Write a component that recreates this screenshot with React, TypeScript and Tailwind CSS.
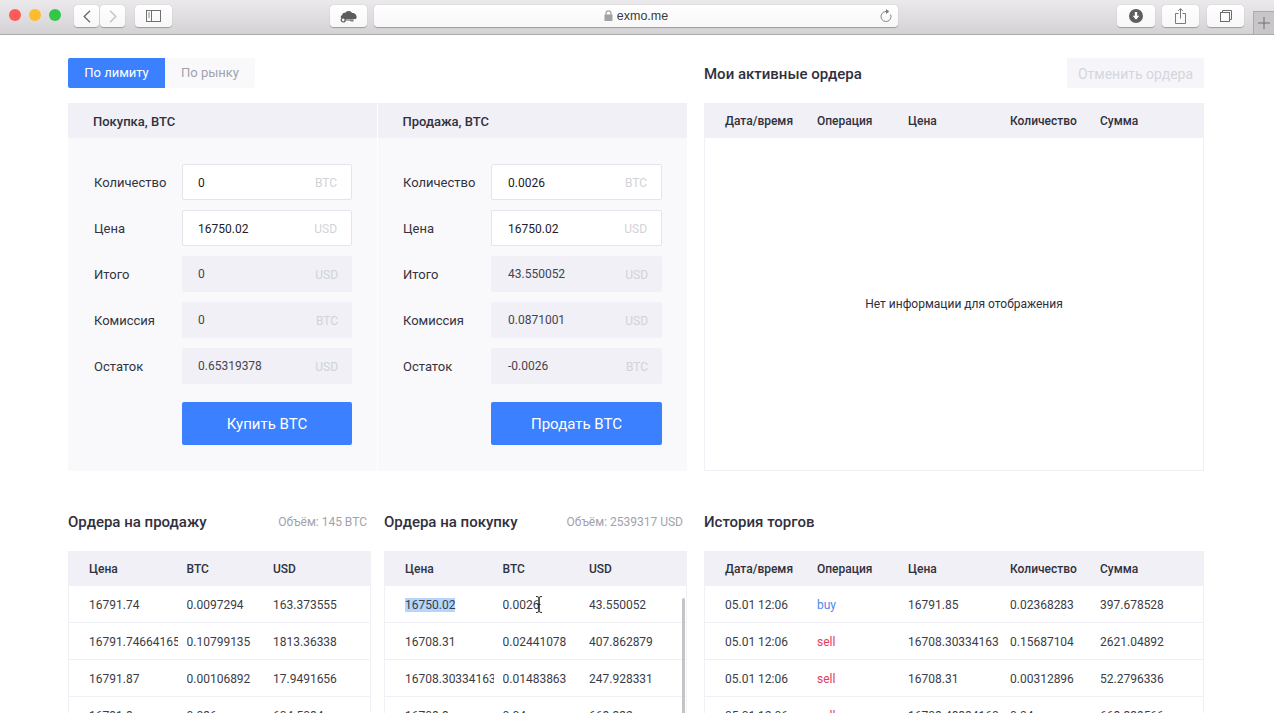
const limitForms = [
  {
    title: 'Покупка, BTC',
    button: 'Купить BTC',
    rows: [
      { label: 'Количество', value: '0', unit: 'BTC', editable: true },
      { label: 'Цена', value: '16750.02', unit: 'USD', editable: true },
      { label: 'Итого', value: '0', unit: 'USD', editable: false },
      { label: 'Комиссия', value: '0', unit: 'BTC', editable: false },
      { label: 'Остаток', value: '0.65319378', unit: 'USD', editable: false },
    ],
  },
  {
    title: 'Продажа, BTC',
    button: 'Продать BTC',
    rows: [
      { label: 'Количество', value: '0.0026', unit: 'BTC', editable: true },
      { label: 'Цена', value: '16750.02', unit: 'USD', editable: true },
      { label: 'Итого', value: '43.550052', unit: 'USD', editable: false },
      { label: 'Комиссия', value: '0.0871001', unit: 'USD', editable: false },
      { label: 'Остаток', value: '-0.0026', unit: 'BTC', editable: false },
    ],
  },
];

const sellOrders = [
  ['16791.74', '0.0097294', '163.373555'],
  ['16791.74664165', '0.10799135', '1813.36338'],
  ['16791.87', '0.00106892', '17.9491656'],
  ['16791.8', '0.036', '604.5084'],
];

const buyOrders = [
  ['16750.02', '0.0026', '43.550052'],
  ['16708.31', '0.02441078', '407.862879'],
  ['16708.30334163', '0.01483863', '247.928331'],
  ['16708.3', '0.04', '668.332'],
];

const history = [
  ['05.01 12:06', 'buy', '16791.85', '0.02368283', '397.678528'],
  ['05.01 12:06', 'sell', '16708.30334163', '0.15687104', '2621.04892'],
  ['05.01 12:06', 'sell', '16708.31', '0.00312896', '52.2796336'],
  ['05.01 12:06', 'sell', '16708.48884160', '0.04', '668.339566'],
];

function ToolButton({ className, children }: { className: string; children?: React.ReactNode }) {
  return (
    <div className={`h-[22px] flex items-center justify-center bg-gradient-to-b from-white to-[#f7f7f7] rounded-[4px] shadow-[0_0.5px_1px_rgba(0,0,0,0.28)] ${className}`}>
      {children}
    </div>
  );
}

function BrowserBar() {
  return (
    <div className="relative h-[35px] shrink-0 flex items-center pb-[2px] bg-gradient-to-b from-[#ebe9eb] to-[#d4d2d4] border-b border-[#acabac]">
      <div className="flex items-center gap-2 pl-[9px] -mt-[2px]">
        <span className="w-3 h-3 rounded-full bg-[#fc5b57]" />
        <span className="w-3 h-3 rounded-full bg-[#fdbc2e]" />
        <span className="w-3 h-3 rounded-full bg-[#33c748]" />
      </div>
      <div className="flex ml-[13px] gap-[1px]">
        <ToolButton className="w-[25px]">
          <svg width="8" height="13" viewBox="0 0 8 13" fill="none" stroke="#6a6a6a" strokeWidth="1.3">
            <path d="M7 0.8L1.2 6.5 7 12.2" />
          </svg>
        </ToolButton>
        <ToolButton className="w-[25px]">
          <svg width="8" height="13" viewBox="0 0 8 13" fill="none" stroke="#c0c0c0" strokeWidth="1.3">
            <path d="M1 0.8L6.8 6.5 1 12.2" />
          </svg>
        </ToolButton>
      </div>
      <ToolButton className="w-[37px] ml-[10px]">
        <svg width="15" height="12" viewBox="0 0 15 12" fill="none" stroke="#707070">
          <rect x="0.5" y="0.5" width="14" height="11" />
          <path d="M5.5 0.5v11" />
          <path d="M2 3h2M2 5h2M2 7h2" strokeWidth="0.8" />
        </svg>
      </ToolButton>
      <ToolButton className="w-[37px] ml-[158px]">
        <svg width="17" height="13" viewBox="0 0 17 13">
          <path d="M3 9.5C0.5 9 0 6 2.2 5 2.4 3.2 4 2.4 5.2 2.9 6.4 0.5 10.5 0.2 12 3 14.5 2.8 17 5 16.6 7.5 16.4 8.8 15.4 9.5 14.5 9.5z" fill="#5c5c5c" />
          <path d="M1 9.7h14v1.6H5.5" fill="none" stroke="#ffffff" strokeWidth="1" />
          <circle cx="3.2" cy="10" r="2" fill="#f4f4f4" stroke="#5c5c5c" strokeWidth="1.2" />
          <path d="M5 10h8.5M11 10v1.5M12.8 10v1.5" fill="none" stroke="#5c5c5c" strokeWidth="1.2" />
        </svg>
      </ToolButton>
      <ToolButton className="w-[524px] ml-[7px] relative">
        <div className="flex items-center gap-[4px] font-['Liberation_Sans',sans-serif] text-[12.5px] text-[#3a3a3a]">
          <svg width="9" height="11" viewBox="0 0 9 11" className="-mt-[1px]">
            <path d="M2 5V3.2C2 1.8 3 .8 4.5 .8S7 1.8 7 3.2V5" fill="none" stroke="#a2a2a2" strokeWidth="1.2" />
            <rect x="0.5" y="4.5" width="8" height="6.5" rx="0.5" fill="#a2a2a2" />
          </svg>
          <span>exmo.me</span>
        </div>
        <svg className="absolute right-[6px] top-[3px]" width="12" height="15" viewBox="0 0 12 15" fill="none">
          <path d="M6 3.5A5 5 0 1 0 10.6 6.5" stroke="#787878" strokeWidth="0.9" />
          <path d="M6 1L9.2 3.5 6 6z" fill="#787878" />
        </svg>
      </ToolButton>
      <ToolButton className="w-[38px] ml-[219px]">
        <svg width="14" height="14" viewBox="0 0 14 14">
          <circle cx="7" cy="7" r="7" fill="#5e5e5e" />
          <path d="M5.8 3h2.4v3.8h2.2L7 10.8 3.6 6.8h2.2z" fill="#ffffff" />
        </svg>
      </ToolButton>
      <ToolButton className="w-[37px] ml-[7px]">
        <svg width="11" height="16" viewBox="0 0 11 16" fill="none" stroke="#6c6c6c" strokeWidth="0.9">
          <path d="M3.5 5.5h-3v10h10v-10h-3" />
          <path d="M5.5 10.5V0.8M3.2 3L5.5 0.6 7.8 3" />
        </svg>
      </ToolButton>
      <ToolButton className="w-[37px] ml-[8px]">
        <svg width="12" height="12" viewBox="0 0 12 12" fill="none" stroke="#6c6c6c">
          <rect x="0.5" y="2.5" width="9" height="9" />
          <path d="M2.5 2.5v-2h9v9h-2" />
        </svg>
      </ToolButton>
      <div className="absolute right-0 top-[11px] w-[21px] h-[23px] flex items-center justify-center bg-[#c8c6c8] border-l border-t border-[#acabac]">
        <svg width="12" height="12" viewBox="0 0 12 12" stroke="#707070" strokeWidth="1">
          <path d="M6 0v12M0 6h12" />
        </svg>
      </div>
    </div>
  );
}

function FormColumn({ form, sell }: { form: (typeof limitForms)[number]; sell: boolean }) {
  return (
    <div className="flex flex-col w-[309px]">
      <div className={`h-[35px] flex items-center pt-[2px] bg-[#f0f0f6] text-[13px] font-medium text-[#30303e] ${sell ? 'pl-[24.5px]' : 'pl-[25px]'}`}>
        {form.title}
      </div>
      <div className={`flex-1 bg-[#f9f9fb] pt-[26px] ${sell ? 'pl-[25px]' : 'pl-[26px]'} pr-[25px]`}>
        <div className="flex flex-col gap-[10px]">
          {form.rows.map((row) => (
            <div key={row.label} className="flex items-center justify-between h-[36px]">
              <span className="pt-[2px] text-[13px] text-[#33333f]">{row.label}</span>
              <div
                className={`h-[36px] flex items-center justify-between pt-[2px] pr-[14px] rounded-[2px] text-[12px] ${
                  sell ? 'w-[171px]' : 'w-[170px]'
                } ${
                  row.editable
                    ? `bg-white border border-[#e4e4ec] text-[#1c1c28] ${sell ? 'pl-[16px]' : 'pl-[15px]'}`
                    : `bg-[#f0f0f6] text-[#44444f] ${sell ? 'pl-[17px]' : 'pl-[16px]'}`
                }`}
              >
                <span className={row.editable ? '' : '-mt-[2px]'}>{row.value}</span>
                <span className="text-[#d2d2da]">{row.unit}</span>
              </div>
            </div>
          ))}
        </div>
        <div className="flex justify-end mt-[18px]">
          <button className={`h-[43px] pt-[2px] rounded-[2px] bg-[#3b80fe] text-white text-[15px] ${sell ? 'w-[171px]' : 'w-[170px]'}`}>
            {form.button}
          </button>
        </div>
      </div>
    </div>
  );
}

function Table({
  head,
  rows,
  cols,
  selected,
}: {
  head: string[];
  rows: string[][];
  cols: string;
  selected?: boolean;
}) {
  return (
    <div>
      <div className={`h-[35px] grid ${cols} items-center pl-[21px] bg-[#f0f0f6] text-[12px] font-medium text-[#30303e]`}>
        {head.map((h) => (
          <span key={h}>{h}</span>
        ))}
      </div>
      <div className="border-x border-[#f0f0f6]">
        {rows.map((row, i) => (
          <div key={i} className={`h-[37px] grid ${cols} items-center pt-[2px] pl-[20px] border-b border-[#f0f0f6] text-[12px] text-[#3c3c46]`}>
            {row.map((cell, j) => (
              <span
                key={j}
                className={`overflow-hidden whitespace-nowrap ${
                  cell === 'buy' ? 'text-[#4a8ae8]' : cell === 'sell' ? 'text-[#e0405e]' : ''
                }`}
              >
                {selected && i === 0 && j === 0 ? <span className="bg-[#b4d5fe]">{cell}</span> : cell}
              </span>
            ))}
          </div>
        ))}
      </div>
    </div>
  );
}

export default function App() {
  return (
    <div className="h-[713px] overflow-hidden flex flex-col bg-white font-['Roboto',sans-serif]">
      <BrowserBar />

      <div className="pl-[68px] pt-[23px]">
        <div className="flex">
          <div className="w-[619px] flex flex-col">
            <div className="flex h-[30px] text-[13px]">
              <div className="w-[97px] flex items-center justify-center bg-[#3b80fe] text-white rounded-l-[2px]">По лимиту</div>
              <div className="w-[90px] flex items-center justify-center bg-[#f9f9fb] text-[#a2a2ac] rounded-r-[2px]">По рынку</div>
            </div>
            <div className="flex h-[368px] mt-[15px] gap-[1px]">
              <FormColumn form={limitForms[0]} sell={false} />
              <FormColumn form={limitForms[1]} sell />
            </div>
          </div>

          <div className="w-[500px] ml-[17px] flex flex-col">
            <div className="flex h-[30px] items-center justify-between">
              <h2 className="pt-[2px] text-[15px] font-medium text-[#30303e]">Мои активные ордера</h2>
              <div className="w-[137px] h-[30px] flex items-center justify-center pt-[2px] bg-[#f6f6fa] text-[14px] text-[#d5d5dd]">Отменить ордера</div>
            </div>
            <div className="mt-[15px] h-[368px] flex flex-col">
              <div className="h-[35px] shrink-0 grid grid-cols-[92px_91px_102px_90px_1fr] items-center pl-[21px] bg-[#f0f0f6] text-[12px] font-medium text-[#30303e]">
                <span>Дата/время</span>
                <span>Операция</span>
                <span>Цена</span>
                <span>Количество</span>
                <span>Сумма</span>
              </div>
              <div className="flex-1 flex items-center justify-center pl-[20px] border-x border-b border-[#f0f0f6] text-[12px] text-[#2e2e3a]">
                Нет информации для отображения
              </div>
            </div>
          </div>
        </div>

        <div className="flex mt-[35px]">
          <div className="w-[303px]">
            <div className="h-[30px] flex items-center justify-between pt-[2px] pr-[4px]">
              <h2 className="text-[15px] font-medium text-[#30303e]">Ордера на продажу</h2>
              <span className="text-[12px] text-[#a2a2ac]">Объём: 145 BTC</span>
            </div>
            <div className="mt-[15px]">
              <Table head={['Цена', 'BTC', 'USD']} rows={sellOrders} cols="grid-cols-[89px_78px_1fr] gap-x-[8.5px]" />
            </div>
          </div>

          <div className="w-[303px] ml-[13px] relative">
            <div className="h-[30px] flex items-center justify-between pt-[2px] pr-[4px]">
              <h2 className="text-[15px] font-medium text-[#30303e]">Ордера на покупку</h2>
              <span className="text-[12px] text-[#a2a2ac]">Объём: 2539317 USD</span>
            </div>
            <div className="mt-[15px]">
              <Table head={['Цена', 'BTC', 'USD']} rows={buyOrders} cols="grid-cols-[89px_78px_1fr] gap-x-[8.5px]" selected />
            </div>
            <div className="absolute left-[298px] top-[92px] w-[3px] h-[130px] rounded-full bg-[#c4c4c4]" />
            <svg className="absolute left-[151px] top-[90px]" width="8" height="17" viewBox="0 0 8 17" fill="none" stroke="#222222" strokeWidth="1">
              <path d="M1 0.5c1.5 0 3 .5 3 1.5v13c0 1-1.5 1.5-3 1.5M7 0.5c-1.5 0-3 .5-3 1.5v13c0 1 1.5 1.5 3 1.5M2.5 8.5h3" />
            </svg>
          </div>

          <div className="w-[500px] ml-[17px]">
            <div className="h-[30px] flex items-center pt-[2px]">
              <h2 className="text-[15px] font-medium text-[#30303e]">История торгов</h2>
            </div>
            <div className="mt-[15px]">
              <Table
                head={['Дата/время', 'Операция', 'Цена', 'Количество', 'Сумма']}
                rows={history}
                cols="grid-cols-[92px_91px_102px_90px_1fr]"
              />
            </div>
          </div>
        </div>
      </div>
    </div>
  );
}
